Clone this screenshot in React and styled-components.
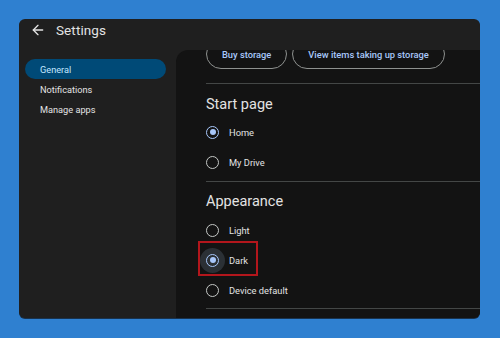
import styled, { createGlobalStyle } from "styled-components";
import { ArrowLeft } from "lucide-react";

const GlobalStyle = createGlobalStyle`
  html, body {
    margin: 0;
    background: #2f80d0;
  }
  body {
    font-family: Roboto, "Liberation Sans", sans-serif;
  }
`;

const Page = styled.div`
  width: 500px;
  height: 338px;
  padding: 19px 20px 20px 19px;
  box-sizing: border-box;
`;

const Window = styled.div`
  width: 461px;
  height: 299px;
  background: #1f1f1f;
  border-radius: 6px;
  overflow: hidden;
  display: flex;
  flex-direction: column;
  box-shadow: 0 1px 0 #17324f;
`;

const Header = styled.div`
  height: 22px;
  display: flex;
  align-items: center;
  padding-left: 11px;
  gap: 10px;
  color: #e3e3e3;
  flex-shrink: 0;
`;

const Title = styled.span`
  font-size: 13.5px;
  letter-spacing: 0.1px;
`;

const Body = styled.div`
  flex: 1;
  display: grid;
  grid-template-columns: 157px 1fr;
  margin-top: 9px;
  min-height: 0;
`;

const Sidebar = styled.nav`
  padding: 9px 10px 0 6px;
  display: flex;
  flex-direction: column;
`;

const NavItem = styled.div`
  height: 20px;
  display: flex;
  align-items: center;
  padding-left: 15px;
  border-radius: 10px;
  font-size: 9.2px;
  color: ${(p) => (p.$active ? "#c2e7ff" : "#e3e3e3")};
  background: ${(p) => (p.$active ? "#004a77" : "transparent")};
`;

const Main = styled.main`
  background: #131313;
  border-top-left-radius: 12px;
  overflow: hidden;
  padding-left: 30px;
`;

const ButtonRow = styled.div`
  display: flex;
  gap: 5px;
  margin-top: -11px;
`;

const OutlineButton = styled.div`
  height: 30px;
  box-sizing: border-box;
  border: 1px solid #8e918f;
  border-radius: 15px;
  padding: 0 15px;
  display: flex;
  align-items: center;
  font-size: 9.3px;
  font-weight: 500;
  color: #a8c7fa;
`;

const Divider = styled.div`
  height: 1px;
  background: #444746;
  margin-top: ${(p) => p.$top}px;
`;

const SectionTitle = styled.h2`
  margin: ${(p) => p.$top}px 0 0;
  font-size: 14.5px;
  line-height: 20px;
  font-weight: 400;
  color: #e3e3e3;
`;

const RadioList = styled.div`
  margin-top: ${(p) => p.$top}px;
  display: flex;
  flex-direction: column;
`;

const RadioRow = styled.div`
  position: relative;
  height: 30px;
  display: flex;
  align-items: center;
  gap: 10px;
  font-size: 9.3px;
  color: #e3e3e3;
`;

const RadioWrap = styled.span`
  position: relative;
  width: 13px;
  height: 13px;
  display: flex;
  align-items: center;
  justify-content: center;
  &::before {
    content: "";
    position: absolute;
    width: 25px;
    height: 25px;
    border-radius: 50%;
    background: ${(p) => (p.$hover ? "#2b3035" : "transparent")};
  }
`;

const Circle = styled.span`
  position: relative;
  width: 13px;
  height: 13px;
  box-sizing: border-box;
  border-radius: 50%;
  border: 1.6px solid ${(p) => (p.$checked ? "#a8c7fa" : "#c4c7c5")};
  display: flex;
  align-items: center;
  justify-content: center;
  &::after {
    content: "";
    width: 6px;
    height: 6px;
    border-radius: 50%;
    background: ${(p) => (p.$checked ? "#a8c7fa" : "transparent")};
  }
`;

const Highlight = styled.span`
  position: absolute;
  left: -8px;
  top: -4px;
  width: 60px;
  height: 35px;
  box-sizing: border-box;
  border: 2px solid #b3161c;
  pointer-events: none;
`;

function Radio({ label, checked, hover, marked }) {
  return (
    <RadioRow>
      <RadioWrap $hover={hover}>
        <Circle $checked={checked} />
      </RadioWrap>
      <span>{label}</span>
      {marked && <Highlight />}
    </RadioRow>
  );
}

export default function App() {
  return (
    <>
      <GlobalStyle />
      <Page>
        <Window>
          <Header>
            <ArrowLeft size={16} strokeWidth={2} />
            <Title>Settings</Title>
          </Header>
          <Body>
            <Sidebar>
              <NavItem $active>General</NavItem>
              <NavItem>Notifications</NavItem>
              <NavItem>Manage apps</NavItem>
            </Sidebar>
            <Main>
              <ButtonRow>
                <OutlineButton>Buy storage</OutlineButton>
                <OutlineButton>View items taking up storage</OutlineButton>
              </ButtonRow>
              <Divider $top={14} />
              <SectionTitle $top={11}>Start page</SectionTitle>
              <RadioList $top={2}>
                <Radio label="Home" checked />
                <Radio label="My Drive" />
              </RadioList>
              <Divider $top={4} />
              <SectionTitle $top={10}>Appearance</SectionTitle>
              <RadioList $top={3}>
                <Radio label="Light" />
                <Radio label="Dark" checked hover marked />
                <Radio label="Device default" />
              </RadioList>
              <Divider $top={3} />
            </Main>
          </Body>
        </Window>
      </Page>
    </>
  );
}
